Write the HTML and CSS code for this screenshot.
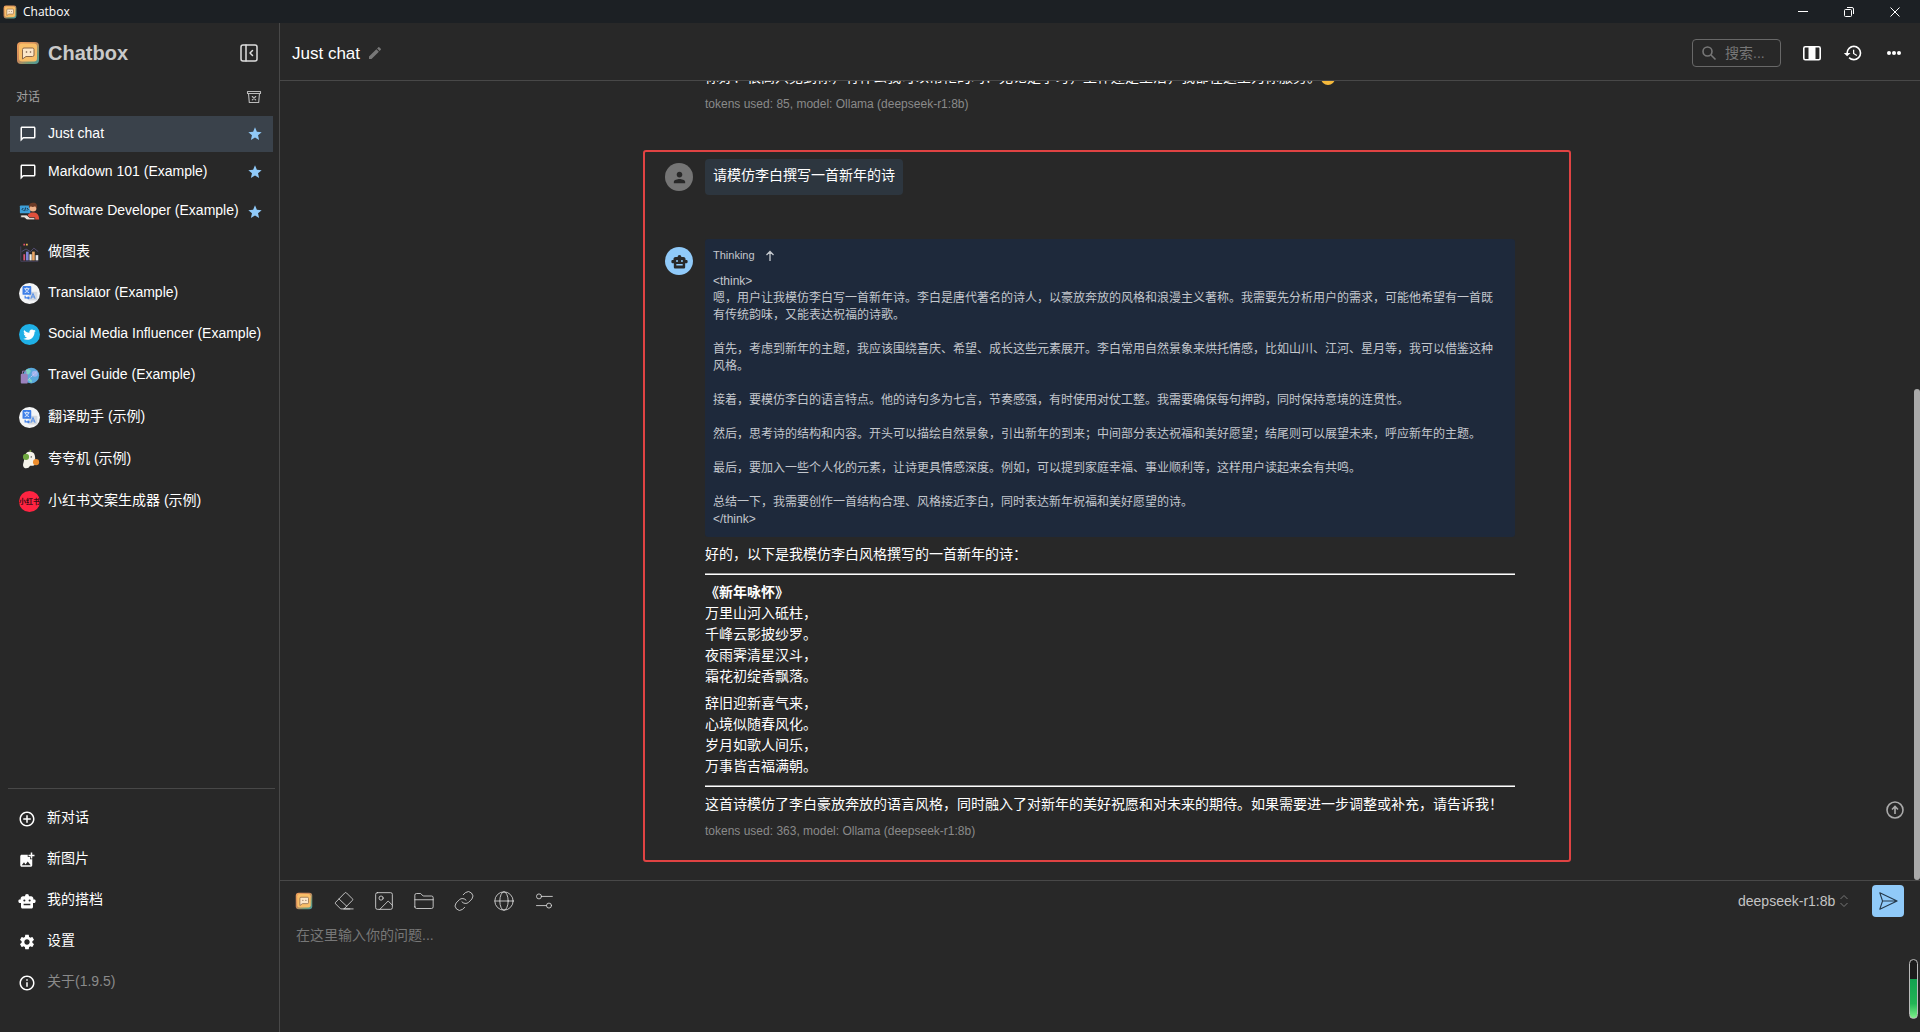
FILE: index.html
```
<!DOCTYPE html>
<html lang="zh-CN">
<head>
<meta charset="UTF-8">
<title>Chatbox</title>
<link rel="stylesheet" href="styles.css">
</head>
<body>
	<svg class="defs" aria-hidden="true">
		<symbol id="logo" viewBox="0 0 24 24">
			<defs>
				<linearGradient id="edge" x1="0" y1="0" x2="1" y2="1">
					<stop offset="0" stop-color="#f0a05c"/>
					<stop offset="0.45" stop-color="#c9875a"/>
					<stop offset="0.75" stop-color="#6f9a78"/>
					<stop offset="1" stop-color="#4b9aa0"/>
				</linearGradient>
			</defs>
			<rect x="1" y="1" width="22" height="22" rx="4" fill="url(#edge)"/>
			<rect x="3" y="2.500" width="18" height="18" rx="3" fill="#f8be68"/>
			<path d="M8 7h8.500a1.500 1.500 0 0 1 1.500 1.500v5.500a1.500 1.500 0 0 1-1.500 1.500h-6.500l-3.500 2.500v-9.500a1.500 1.500 0 0 1 1.500-1.500z" fill="#fbe6c8" stroke="#8a6646" stroke-width="1"/>
			<circle cx="10.500" cy="11" r=".8" fill="#70513c"/><circle cx="14.500" cy="11" r=".8" fill="#70513c"/>
		</symbol>
		<symbol id="bubble" viewBox="0 0 24 24"><path fill="currentColor" d="M20 2H4c-1.100 0-2 .9-2 2v18l4-4h14c1.100 0 2-.9 2-2V4c0-1.100-.9-2-2-2zm0 14H5.200L4 17.200V4h16v12z"/></symbol>
		<symbol id="star" viewBox="0 0 24 24"><path fill="currentColor" d="M12 17.270 18.180 21l-1.640-7.030L22 9.240l-7.190-.61L12 2 9.190 8.630 2 9.240l5.460 4.730L5.820 21z"/></symbol>
		<symbol id="robot" viewBox="0 0 24 24"><path fill="currentColor" fill-rule="evenodd" d="M22 10h-1.500V8.500c0-1.650-1.350-3-3-3h-2.800a2.700 2.700 0 1 0-5.400 0H6.500c-1.650 0-3 1.350-3 3V10H2c-1 0-1.500.8-1.500 2s.5 2.500 1.500 2.500h2V20c0 1.100.9 2 2 2h12c1.100 0 2-.9 2-2v-5.500h2c1 0 1.500-1.300 1.500-2.500s-.5-2-1.500-2zM8.500 10a1.400 1.400 0 1 1 0 2.800 1.400 1.400 0 0 1 0-2.800zm7 0a1.400 1.400 0 1 1 0 2.800 1.400 1.400 0 0 1 0-2.800zM7.500 15.500h9v2h-9z"/></symbol>
		<symbol id="translate" viewBox="0 0 24 24">
			<circle cx="12" cy="12" r="12" fill="#f4f5f6"/>
			<rect x="11" y="10" width="10" height="10" rx="1" fill="#d5d9df"/>
			<rect x="4" y="3.500" width="10" height="10" rx="1" fill="#3e7fe8"/>
			<path d="M6 6.500h6M9 5v1.500M11 6.500C10.500 9 8.500 10.500 6.500 11M7 6.500c.5 2 2.500 4 4.500 4.500" fill="none" stroke="#fff" stroke-width="0.900"/>
			<path d="M13.500 18 16 12l2.500 6M14.400 16h3.200" fill="none" stroke="#5d93e6" stroke-width="1.200"/>
			<path d="M7 14.500v2.500h4.500M10 15.500l1.700 1.500-1.700 1.500" fill="none" stroke="#3e7fe8" stroke-width="1.300"/>
		</symbol>
	</svg>

	<div class="titlebar">
		<svg class="mini"><use href="#logo"/></svg>
		<span>Chatbox</span>
		<div class="winbtns">
			<button aria-label="最小化"><svg viewBox="0 0 12 12"><path d="M1 5.500h10"/></svg></button>
			<button aria-label="还原"><svg viewBox="0 0 12 12"><rect x="1.500" y="3.500" width="7" height="7" rx="1"/><path d="M4 1.500h5a1.500 1.500 0 0 1 1.500 1.500v5"/></svg></button>
			<button aria-label="关闭"><svg viewBox="0 0 12 12"><path d="M1.500 1.500l9 9M10.500 1.500l-9 9"/></svg></button>
		</div>
	</div>

	<div class="app">
		<aside class="sidebar">
			<div class="brand">
				<svg class="logo"><use href="#logo"/></svg>
				<h1>Chatbox</h1>
				<button aria-label="收起侧栏"><svg class="line" width="20" height="20" viewBox="0 0 20 20" stroke-width="1.500"><rect x="2" y="2" width="16" height="16" rx="2"/><path d="M7 2v16M13.500 7.500 11 10l2.500 2.500"/></svg></button>
			</div>
			<div class="caption">
				<span>对话</span>
				<button aria-label="归档"><svg class="line" width="16" height="16" viewBox="0 0 16 16" stroke-width="1.100"><path d="M1.500 2.500h13v2h-13zM2.500 4.500l.8 9h9.400l.8-9M6.300 7.500l3.400 3.400M9.700 7.500l-3.400 3.400"/></svg></button>
			</div>
			<ul class="chats">
				<li class="active"><a href="#"><svg class="ico"><use href="#bubble"/></svg><span>Just chat</span><svg class="star"><use href="#star"/></svg></a></li>
				<li><a href="#"><svg class="ico"><use href="#bubble"/></svg><span>Markdown 101 (Example)</span><svg class="star"><use href="#star"/></svg></a></li>
				<li class="pic"><a href="#">
					<svg class="ava" viewBox="0 0 24 24"><rect x="1" y="5" width="12" height="9" rx="1" fill="#3d9fd8"/><path d="M5 8l-1.500 1.500L5 11M9 8l1.500 1.500L9 11M7.500 7.500 6.500 11.500" stroke="#123" fill="none"/><circle cx="16" cy="8" r="4" fill="#f0b28a"/><path d="M11.500 8c-1-5 2-6 5-6s5 2 4 7l-2-3c-2 1-4 1-5 0z" fill="#6b3a26"/><path d="M9 20c0-5 3-7 7-7s7 2 7 8H11z" fill="#e2503c"/><path d="M2 16h7l3 3h6v2.500H9L6 19H2z" fill="#e8e1da" stroke="#222" stroke-width="0.800"/></svg>
					<span>Software Developer (Example)</span><svg class="star"><use href="#star"/></svg></a></li>
				<li class="pic"><a href="#">
					<svg class="ava" viewBox="0 0 24 24"><path d="M2 5v17h20" stroke="#4b4663" fill="none"/><path d="M3 11l5-3 5 3 4-4 5 4" stroke="#57507a" fill="none"/><path d="M5 3h2" stroke="#e2506a" stroke-width="2"/><path d="M8 3h2" stroke="#e9b84e" stroke-width="2"/><path d="M5 14h2v7H5z" fill="#d8547a"/><path d="M8 11h3v10H8z" fill="#7d83d8"/><path d="M12 14h2.500v7H12z" fill="#f3efe6"/><path d="M15 11h3v10h-3z" fill="#e9a566"/><path d="M19 15h3v6h-3z" fill="#e8eaf0"/></svg>
					<span>做图表</span></a></li>
				<li class="pic"><a href="#"><svg class="ava"><use href="#translate"/></svg><span>Translator (Example)</span></a></li>
				<li class="pic"><a href="#">
					<svg class="ava" viewBox="0 0 24 24"><circle cx="12" cy="12" r="12" fill="#1fb0e6"/><path fill="#fff" transform="translate(4.800 5) scale(.6)" d="M23.950 4.570a10 10 0 0 1-2.820.77 4.960 4.960 0 0 0 2.160-2.720c-.95.55-2 .95-3.120 1.180a4.920 4.920 0 0 0-8.390 4.480C7.690 8.100 4.070 6.130 1.640 3.160a4.920 4.920 0 0 0 1.520 6.570 4.900 4.900 0 0 1-2.230-.61v.06a4.920 4.920 0 0 0 3.950 4.830 5 5 0 0 1-2.210.08 4.940 4.940 0 0 0 4.600 3.420A9.870 9.870 0 0 1 0 19.540a14 14 0 0 0 7.550 2.210c9.050 0 14-7.500 14-13.990v-.64a9.940 9.940 0 0 0 2.400-2.550z"/></svg>
					<span>Social Media Influencer (Example)</span></a></li>
				<li class="pic"><a href="#">
					<svg class="ava" viewBox="0 0 24 24"><circle cx="14" cy="12" r="9" fill="#5aa9dc"/><path d="M8 6c4-2 6 0 4 3s-3 1-4 4M10 17c3-2 5 0 4 3" stroke="#7fd6c4" fill="#7fd6c4"/><circle cx="18" cy="10" r="3.500" fill="#9fb4ee"/><path d="M9 18 21 7" stroke="#d5c7f2" stroke-dasharray="2 1"/><rect x="2" y="10" width="8" height="11" rx="1" fill="#9b82bd"/><path d="M4 10V7h4v3" stroke="#9b82bd" fill="none"/></svg>
					<span>Travel Guide (Example)</span></a></li>
				<li class="pic zh"><a href="#"><svg class="ava"><use href="#translate"/></svg><span>翻译助手 (示例)</span></a></li>
				<li class="pic zh"><a href="#">
					<svg class="ava" viewBox="0 0 24 24"><path d="M13 1v4" stroke="#6b8a3a" stroke-width="2"/><path d="M8 5c3-3 9-2 10 2s0 6 1 8-1 4-4 4-2 0-3 1-1 2-4 2-4-3-3-6 1-8 3-11z" fill="#f5f3ea"/><circle cx="8" cy="9" r="3.500" fill="#6ea83f"/><circle cx="19.500" cy="15" r="3.500" fill="#ec8c2c"/><circle cx="14" cy="9" r=".8" fill="#333"/></svg>
					<span>夸夸机 (示例)</span></a></li>
				<li class="pic zh"><a href="#"><span class="red-ava">小红书</span><span>小红书文案生成器 (示例)</span></a></li>
			</ul>
			<ul class="menu">
				<li><a href="#"><svg class="ico" viewBox="0 0 24 24"><path fill="currentColor" d="M13 7h-2v4H7v2h4v4h2v-4h4v-2h-4V7zm-1-5C6.480 2 2 6.480 2 12s4.480 10 10 10 10-4.480 10-10S17.520 2 12 2zm0 18c-4.410 0-8-3.590-8-8s3.590-8 8-8 8 3.590 8 8-3.590 8-8 8z"/></svg><span>新对话</span></a></li>
				<li><a href="#"><svg class="ico" viewBox="0 0 24 24"><path fill="currentColor" d="M19 7v2.990s-1.990.01-2 0V7h-3s.01-1.990 0-2h3V2h2v3h3v2h-3zm-3 4V8h-3V5H5c-1.100 0-2 .9-2 2v12c0 1.100.9 2 2 2h12c1.100 0 2-.9 2-2v-8h-3zM5 19l3-4 2 3 3-4 4 5H5z"/></svg><span>新图片</span></a></li>
				<li><a href="#"><svg class="ico"><use href="#robot"/></svg><span>我的搭档</span></a></li>
				<li><a href="#"><svg class="ico" viewBox="0 0 24 24"><path fill="currentColor" d="M19.140 12.940c.04-.3.06-.61.06-.94 0-.32-.02-.64-.07-.94l2.030-1.580c.18-.14.23-.41.12-.61l-1.920-3.320c-.12-.22-.37-.29-.59-.22l-2.390.96c-.5-.38-1.030-.7-1.620-.94l-.36-2.540c-.04-.24-.24-.41-.48-.41h-3.840c-.24 0-.43.17-.47.41l-.36 2.540c-.59.24-1.130.57-1.620.94l-2.390-.96c-.22-.08-.47 0-.59.22L2.740 8.870c-.12.21-.08.47.12.61l2.030 1.580c-.05.3-.09.63-.09.94s.02.64.07.94l-2.030 1.580c-.18.14-.23.41-.12.61l1.920 3.320c.12.22.37.29.59.22l2.390-.96c.5.38 1.030.7 1.620.94l.36 2.540c.05.24.24.41.48.41h3.840c.24 0 .44-.17.47-.41l.36-2.540c.59-.24 1.130-.56 1.620-.94l2.390.96c.22.08.47 0 .59-.22l1.920-3.320c.12-.22.07-.47-.12-.61l-2.010-1.580zM12 15.600c-1.980 0-3.600-1.620-3.600-3.600s1.620-3.600 3.600-3.600 3.600 1.620 3.600 3.600-1.620 3.600-3.600 3.600z"/></svg><span>设置</span></a></li>
				<li class="about"><a href="#"><svg class="ico" viewBox="0 0 24 24"><path fill="currentColor" d="M11 7h2v2h-2zm0 4h2v6h-2zm1-9C6.480 2 2 6.480 2 12s4.480 10 10 10 10-4.480 10-10S17.520 2 12 2zm0 18c-4.410 0-8-3.590-8-8s3.590-8 8-8 8 3.590 8 8-3.590 8-8 8z"/></svg><span>关于(1.9.5)</span></a></li>
			</ul>
		</aside>

		<main class="main">
			<header class="topbar">
				<h2>Just chat</h2>
				<button class="edit" aria-label="编辑"><svg width="16" height="16" viewBox="0 0 24 24"><path fill="currentColor" d="M3 17.250V21h3.750L17.810 9.940l-3.750-3.750L3 17.250zM20.710 7.040a1 1 0 0 0 0-1.410l-2.340-2.340a1 1 0 0 0-1.410 0l-1.830 1.830 3.750 3.750 1.830-1.830z"/></svg></button>
				<label class="search">
					<svg width="16" height="16" viewBox="0 0 16 16" fill="none" stroke="currentColor" stroke-width="1.600"><circle cx="6.500" cy="6.500" r="4.500"/><path d="M10 10l4.500 4.500"/></svg>
					<input type="text" placeholder="搜索..." aria-label="搜索">
				</label>
				<button aria-label="宽屏"><svg width="20" height="20" viewBox="0 0 20 20"><rect x="1.800" y="3.800" width="16.400" height="13" rx="1.500" fill="none" stroke="#fff" stroke-width="1.600"/><path fill="#fff" d="M6.500 4h7v13h-7z"/></svg></button>
				<button aria-label="历史"><svg width="20" height="20" viewBox="0 0 24 24"><path fill="#fff" d="M13 3a9 9 0 0 0-9 9H1l3.890 3.890.07.14L9 12H6c0-3.870 3.130-7 7-7s7 3.130 7 7-3.130 7-7 7c-1.930 0-3.680-.79-4.940-2.060l-1.420 1.420A8.950 8.950 0 0 0 13 21a9 9 0 0 0 0-18zm-1 5v5l4.280 2.540.72-1.210-3.500-2.080V8H12z"/></svg></button>
				<button aria-label="更多"><svg width="20" height="20" viewBox="0 0 20 20" fill="#fff"><circle cx="5" cy="10" r="2"/><circle cx="10" cy="10" r="2"/><circle cx="15" cy="10" r="2"/></svg></button>
			</header>

			<div class="messages">
				<div class="column">
					<div class="msg previous">
						<p>你好！很高兴见到你，有什么我可以帮忙的吗？无论是学习，工作还是生活，我都在这里为你服务。<svg class="smile" viewBox="0 0 14 14"><circle cx="7" cy="7" r="7" fill="#f5b93c"/><path d="M4 8q3 3 6 0" fill="none" stroke="#6b4212"/></svg></p>
						<p class="tokens">tokens used: 85, model: Ollama (deepseek-r1:8b)</p>
					</div>
					<section class="marked">
						<div class="msg user">
							<span class="who"><svg viewBox="0 0 24 24"><path fill="currentColor" d="M12 12c2.210 0 4-1.790 4-4s-1.790-4-4-4-4 1.790-4 4 1.790 4 4 4zm0 2c-2.670 0-8 1.340-8 4v2h16v-2c0-2.660-5.330-4-8-4z"/></svg></span>
							<p class="bubble">请模仿李白撰写一首新年的诗</p>
						</div>
						<div class="msg bot">
							<span class="who"><svg><use href="#robot"/></svg></span>
							<div class="answer">
								<div class="think">
									<button class="toggle">Thinking<svg width="10" height="12" viewBox="0 0 10 12" fill="none" stroke="currentColor" stroke-width="1.300"><path d="M5 11V1.500M1.500 5 5 1.500 8.500 5"/></svg></button>
									<p>&lt;think&gt;<br>嗯，用户让我模仿李白写一首新年诗。李白是唐代著名的诗人，以豪放奔放的风格和浪漫主义著称。我需要先分析用户的需求，可能他希望有一首既有传统韵味，又能表达祝福的诗歌。</p>
									<p>首先，考虑到新年的主题，我应该围绕喜庆、希望、成长这些元素展开。李白常用自然景象来烘托情感，比如山川、江河、星月等，我可以借鉴这种风格。</p>
									<p>接着，要模仿李白的语言特点。他的诗句多为七言，节奏感强，有时使用对仗工整。我需要确保每句押韵，同时保持意境的连贯性。</p>
									<p>然后，思考诗的结构和内容。开头可以描绘自然景象，引出新年的到来；中间部分表达祝福和美好愿望；结尾则可以展望未来，呼应新年的主题。</p>
									<p>最后，要加入一些个人化的元素，让诗更具情感深度。例如，可以提到家庭幸福、事业顺利等，这样用户读起来会有共鸣。</p>
									<p>总结一下，我需要创作一首结构合理、风格接近李白，同时表达新年祝福和美好愿望的诗。<br>&lt;/think&gt;</p>
								</div>
								<p>好的，以下是我模仿李白风格撰写的一首新年的诗：</p>
								<hr>
								<p><strong>《新年咏怀》</strong><br>万里山河入砥柱，<br>千峰云影披纱罗。<br>夜雨霁清星汉斗，<br>霜花初绽香飘落。</p>
								<p>辞旧迎新喜气来，<br>心境似随春风化。<br>岁月如歌人间乐，<br>万事皆吉福满朝。</p>
								<hr>
								<p>这首诗模仿了李白豪放奔放的语言风格，同时融入了对新年的美好祝愿和对未来的期待。如果需要进一步调整或补充，请告诉我！</p>
								<p class="tokens">tokens used: 363, model: Ollama (deepseek-r1:8b)</p>
							</div>
						</div>
					</section>
				</div>
				<span class="thumb"></span>
				<button class="to-top" aria-label="回到顶部"><svg width="20" height="20" viewBox="0 0 20 20" fill="none" stroke="currentColor" stroke-width="1.600"><circle cx="10" cy="10" r="8"/><path d="M10 14V7M7 9.500l3-3 3 3"/></svg></button>
			</div>

			<footer class="composer">
				<div class="tools">
					<button aria-label="Chatbox"><svg class="small-logo"><use href="#logo"/></svg></button>
					<button aria-label="清除"><svg class="line" viewBox="0 0 24 24"><path d="M19 21.500H8L2 15.500a1.400 1.400 0 0 1 0-2L13 2.300a1.400 1.400 0 0 1 2 0l7 7a1.400 1.400 0 0 1 0 2L12 21.500M6 9.500l9.500 9M12 21.500h11"/></svg></button>
					<button aria-label="图片"><svg class="line" viewBox="0 0 24 24"><rect x="2" y="2" width="20" height="20" rx="2"/><circle cx="8.500" cy="8.500" r="2.500"/><path d="M7 22 17 12l5 5"/></svg></button>
					<button aria-label="文件"><svg class="line" viewBox="0 0 24 24"><path d="M1 19V5a2 2 0 0 1 2-2h5l3 3h10a2 2 0 0 1 2 2v11a2 2 0 0 1-2 2H3a2 2 0 0 1-2-2zM1 10.500h22"/></svg></button>
					<button aria-label="链接"><svg class="line" viewBox="0 0 24 24"><path d="M9.500 13a5.500 5.500 0 0 0 8 .6l4-4a5.500 5.500 0 0 0-7.700-7.700l-2.700 2.600M14.500 11a5.500 5.500 0 0 0-8-.6l-4 4a5.500 5.500 0 0 0 7.700 7.700l2.600-2.600"/></svg></button>
					<button aria-label="联网"><svg class="line" viewBox="0 0 24 24"><circle cx="12" cy="12" r="11"/><ellipse cx="12" cy="12" rx="5" ry="11"/><path d="M1 12h22"/></svg></button>
					<button aria-label="参数"><svg class="line" viewBox="0 0 24 24"><circle cx="6" cy="6.500" r="3"/><path d="M9 6.500h13M3 17.500h12"/><circle cx="18" cy="17.500" r="3"/></svg></button>
					<div class="model">
						<select aria-label="模型"><option>deepseek-r1:8b</option></select>
						<svg width="10" height="14" viewBox="0 0 10 14" fill="none" stroke="#777"><path d="M1.500 5 5 1.500 8.500 5M1.500 9 5 12.500 8.500 9"/></svg>
					</div>
					<button class="send" aria-label="发送"><svg viewBox="0 0 22 22" fill="none" stroke="#24384a" stroke-width="1.200" stroke-linejoin="round"><path d="M2 2l19 9-19 9 3-9zM5 11h16"/></svg></button>
				</div>
				<textarea placeholder="在这里输入你的问题..." aria-label="输入"></textarea>
				<span class="meter"></span>
			</footer>
		</main>
	</div>
</body>
</html>
```
FILE: styles.css
```
* {
	box-sizing: border-box;
}
body {
	margin: 0;
	height: 100vh;
	display: flex;
	flex-direction: column;
	overflow: hidden;
	background: #282828;
	color: #fff;
	font: 14px/21px "Liberation Sans", "Noto Sans CJK SC", sans-serif;
}
h1, h2, p, ul {
	margin: 0;
	padding: 0;
	list-style: none;
}
a {
	color: inherit;
	text-decoration: none;
}
button {
	display: flex;
	align-items: center;
	justify-content: center;
	padding: 0;
	border: 0;
	background: none;
	color: inherit;
	font: inherit;
}
.defs {
	position: absolute;
	width: 0;
	height: 0;
}
.line {
	fill: none;
	stroke: #ddd;
	stroke-linecap: round;
	stroke-linejoin: round;
}

/* window bar */
.titlebar {
	display: flex;
	align-items: center;
	gap: 6px;
	height: 23px;
	padding-left: 3px;
	background: #1c2024;
	font: 12px/16px "Open Sans", sans-serif;
}
.mini {
	width: 14px;
	height: 14px;
}
.winbtns {
	display: flex;
	margin-left: auto;
}
.winbtns button {
	width: 46px;
}
.winbtns button:last-child {
	margin-right: 2px;
}
.winbtns svg {
	width: 12px;
	height: 12px;
	fill: none;
	stroke: #fff;
}
.app {
	flex: 1;
	display: flex;
	min-height: 0;
}

/* sidebar */
.sidebar {
	width: 280px;
	flex: none;
	display: flex;
	flex-direction: column;
	border-right: 1px solid #484848;
}
.brand {
	display: flex;
	align-items: center;
	height: 60px;
	padding: 0 20px 0 16px;
}
.brand h1 {
	margin-left: 8px;
	color: #c9c9c9;
	font-size: 20px;
}
.brand button {
	margin-left: auto;
}
.logo {
	width: 24px;
	height: 24px;
}
.caption {
	display: flex;
	align-items: center;
	justify-content: space-between;
	height: 33px;
	padding: 0 17px 5px 16px;
	color: #a0a0a0;
	font-size: 12px;
}
.caption .line {
	stroke: #bbb;
}
.chats {
	display: flex;
	flex-direction: column;
	gap: 2px;
	padding: 0 6px 0 10px;
}
.chats li {
	height: 36px;
}
.chats .pic {
	height: 39px;
}
.chats .zh {
	height: 40px;
}
.chats .active {
	background: #3a424b;
}
.chats a, .menu a {
	display: flex;
	align-items: center;
	height: 100%;
	padding-left: 9px;
	white-space: nowrap;
}
.chats a > span, .menu a > span {
	padding-bottom: 2px;
}
.ico {
	width: 18px;
	height: 18px;
	margin-right: 11px;
	flex: none;
}
.ava, .red-ava {
	width: 21px;
	height: 21px;
	margin-right: 8px;
	flex: none;
}
.red-ava {
	border-radius: 50%;
	background: #ff2442;
	color: #3a0a12;
	font-size: 7px;
	font-weight: bold;
	text-align: center;
}
.star {
	width: 16px;
	height: 16px;
	margin: 0 10px 0 auto;
	color: #90caf9;
}
.menu {
	margin: auto 4px 29px 8px;
	padding-top: 9px;
	border-top: 1px solid #484848;
}
.menu li {
	height: 41px;
}
.menu a {
	padding-left: 10px;
}
.about span {
	color: #8a8a8a;
}

/* conversation */
.main {
	flex: 1;
	min-width: 0;
	display: flex;
	flex-direction: column;
}
.topbar {
	display: flex;
	align-items: center;
	height: 58px;
	padding: 3px 16px 0 12px;
	border-bottom: 1px solid #484848;
}
.topbar h2 {
	font-size: 17px;
	font-weight: normal;
}
.topbar > button {
	margin-left: 21px;
}
.topbar > .edit {
	margin-left: 7px;
	color: #777;
}
.search {
	display: flex;
	align-items: center;
	gap: 8px;
	width: 89px;
	height: 28px;
	margin-left: auto;
	padding: 0 8px;
	border: 1px solid #686868;
	border-radius: 4px;
	color: #777;
}
.search svg {
	flex: none;
}
.search input {
	width: 100%;
	min-width: 0;
	padding: 0;
	border: 0;
	outline: 0;
	background: none;
	color: #fff;
	font: inherit;
}
::placeholder {
	color: #777;
	opacity: 1;
}
.messages {
	position: relative;
	flex: 1;
	min-height: 0;
	display: flex;
	flex-direction: column;
	justify-content: flex-end;
	overflow: hidden;
	padding: 0 0 18px 14px;
}
.column {
	width: 100%;
	max-width: 928px;
	margin: 0 auto;
}
.previous {
	padding: 0 56px 0 62px;
	margin-bottom: 35px;
}
.previous .tokens {
	margin-top: 6px;
}
.smile {
	width: 14px;
	height: 14px;
	vertical-align: middle;
}
.tokens {
	color: #8a8a8a;
	font-size: 12px;
}
.marked {
	padding: 7px 54px 18px 20px;
	border: 2px solid #e04343;
	border-radius: 3px;
}
.user, .bot {
	display: flex;
	align-items: flex-start;
	gap: 12px;
}
.user {
	margin-bottom: 44px;
}
.who {
	display: flex;
	align-items: center;
	justify-content: center;
	width: 28px;
	height: 28px;
	margin-top: 4px;
	flex: none;
	border-radius: 50%;
	background: #757575;
	color: #282828;
}
.who svg {
	width: 17px;
	height: 17px;
}
.bot .who {
	margin-top: 8px;
	background: #90caf9;
}
.bubble {
	height: 36px;
	padding: 6px 8px;
	border-radius: 4px;
	background: #2d363f;
}
.answer {
	flex: 1;
	min-width: 0;
}
.think {
	padding: 8px 16px 9px 8px;
	margin-bottom: 7px;
	border-radius: 3px;
	background: #1e293b;
	color: #c3c7cd;
	font-size: 12px;
	line-height: 17px;
}
.think p + p {
	margin-top: 17px;
}
.toggle {
	gap: 10px;
	height: 17px;
	margin-bottom: 9px;
	font-size: 11px;
}
.answer > p + p {
	margin-top: 6px;
}
.answer hr {
	height: 2px;
	margin: 8px 0 7px;
	border: 0;
	border-top: 1px solid #9a9a9a;
	background: #fff;
}
.thumb {
	position: absolute;
	right: 0;
	top: 308px;
	bottom: 0;
	width: 6px;
	border-radius: 3px;
	background: #aaa;
}
.to-top {
	position: absolute;
	right: 15px;
	bottom: 60px;
	color: #aaa;
}

/* input area */
.composer {
	position: relative;
	height: 152px;
	padding: 4px 16px 0 14px;
	border-top: 1px solid #484848;
}
.tools {
	display: flex;
	align-items: center;
	gap: 20px;
	height: 32px;
}
.tools button svg {
	width: 20px;
	height: 20px;
}
.tools .send {
	width: 32px;
	height: 32px;
	border-radius: 4px;
	background: #90caf9;
}
.tools button .small-logo {
	width: 18px;
	height: 18px;
}
.tools button:first-child {
	width: 20px;
}
.model {
	display: flex;
	align-items: center;
	gap: 3px;
	margin: 0 3px 0 auto;
}
.model select {
	padding: 0;
	border: 0;
	appearance: none;
	background: none;
	color: #c4c4c4;
	font: inherit;
}
.composer textarea {
	display: block;
	width: 100%;
	height: 90px;
	padding: 8px 2px;
	border: 0;
	outline: 0;
	resize: none;
	background: none;
	color: #fff;
	font: inherit;
}
.meter {
	position: absolute;
	right: 2px;
	bottom: 13px;
	width: 9px;
	height: 60px;
	border: 1px solid #bbb;
	border-radius: 5px;
	background: linear-gradient(#1c1c1c 32%, #12a150 32%, #22b455 75%, #7ef08a);
}
```
